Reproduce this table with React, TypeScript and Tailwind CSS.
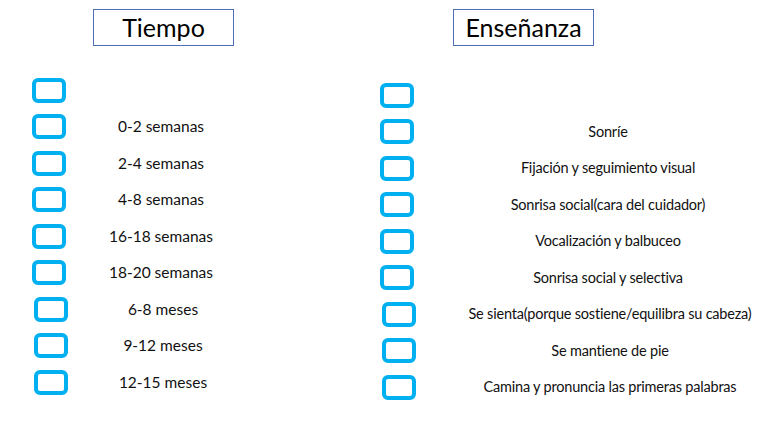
const tiempo = ["", "0-2 semanas", "2-4 semanas", "4-8 semanas", "16-18 semanas", "18-20 semanas", "6-8 meses", "9-12 meses", "12-15 meses"];

const ensenanza = [
  "",
  "Sonríe",
  "Fijación y seguimiento visual",
  "Sonrisa social(cara del cuidador)",
  "Vocalización y balbuceo",
  "Sonrisa social y selectiva",
  "Se sienta(porque sostiene/equilibra su cabeza)",
  "Se mantiene de pie",
  "Camina y pronuncia las primeras palabras",
];

function CheckBox({ shifted }: { shifted: boolean }) {
  return (
    <div
      className={`h-[25px] w-[34px] shrink-0 rounded-[6px] border-[4px] border-[#00b0f0] bg-white ${shifted ? "ml-[2px]" : ""}`}
    />
  );
}

function Header({ title }: { title: string }) {
  return (
    <div className="flex h-[37px] w-[141px] items-center justify-center border border-[#4f6fb8] text-[25px] text-black">
      {title}
    </div>
  );
}

export default function App() {
  return (
    <div
      className="flex h-[425px] w-[768px] overflow-hidden bg-white text-[#111]"
      style={{ fontFamily: "Lato, 'Open Sans', sans-serif" }}
    >
      {/* left column */}
      <div className="flex w-[380px] shrink-0 flex-col pl-[32px] pt-[9px]">
        <div className="ml-[61px]">
          <Header title="Tiempo" />
        </div>
        <div className="mt-[26px] flex flex-col">
          {tiempo.map((t, i) => (
            <div key={i} className="flex h-[36.5px] items-center">
              <CheckBox shifted={i >= 6} />
              <div className="w-[190px] whitespace-nowrap text-center text-[15.5px]">{t}</div>
            </div>
          ))}
        </div>
      </div>

      {/* right column */}
      <div className="flex flex-1 flex-col pt-[9px]">
        <div className="ml-[73px]">
          <Header title="Enseñanza" />
        </div>
        <div className="mt-[31px] flex flex-col">
          {ensenanza.map((t, i) => (
            <div key={i} className="flex h-[36.5px] items-center">
              <CheckBox shifted={i >= 6} />
              <div className="ml-[44px] w-[300px] whitespace-nowrap text-center text-[14.5px] tracking-[-0.2px]">{t}</div>
            </div>
          ))}
        </div>
      </div>
    </div>
  );
}
